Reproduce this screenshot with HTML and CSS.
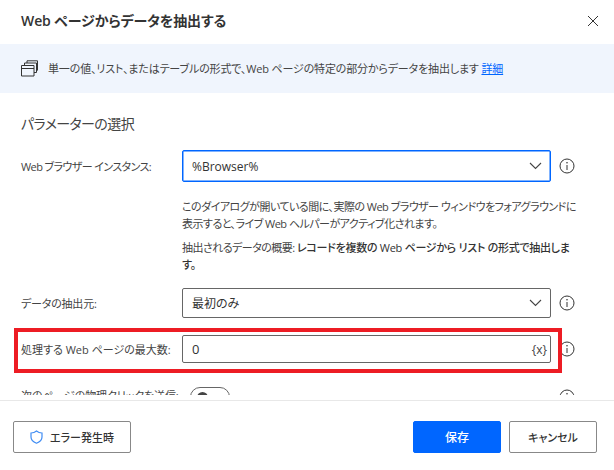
FILE: index.html
```html
<!DOCTYPE html>
<html lang="ja">
<head>
<meta charset="utf-8">
<title>Web ページからデータを抽出する</title>
<link rel="stylesheet" href="styles.css">
</head>
<body>
<div class="dialog">
  <header class="head">
    <h1 class="title">Web ページからデータを抽出する</h1>
    <svg class="close" width="12" height="12" viewBox="0 0 12 12"><path d="M1 1l10 10M11 1L1 11" stroke="#333" stroke-width="1" fill="none"/></svg>
  </header>
  <div class="banner">
    <svg class="banner-icon" width="17" height="17" viewBox="0 0 17 17" fill="none" stroke="#333"><path d="M.5 5.500h12.500v10.500H.5zM.5 8.500H13M3.500 5V3H15.500v9.500H13M6 3V.8h10.500v9.500H15.500"/></svg>
    <span class="banner-text">単一の値、リスト、またはテーブルの形式で、Web ページの特定の部分からデータを抽出します <a class="link" href="#">詳細</a></span>
  </div>
  <main class="body">
    <h2 class="section">パラメーターの選択</h2>
    <div class="row">
      <label class="label label-tight">Web ブラウザー インスタンス:</label>
      <div class="control focus"><span>%Browser%</span><svg class="chev" width="13" height="8" viewBox="0 0 13 8"><path d="M1 1l5.500 5.500L12 1" fill="none" stroke="#444" stroke-width="1.100"/></svg></div>
      <svg class="info" width="16" height="16" viewBox="0 0 16 16"><circle cx="8" cy="8" r="7" fill="none" stroke="#333"/><path d="M8 7v5" stroke="#333"/><circle cx="8" cy="4.800" r=".8" fill="#333"/></svg>
    </div>
    <div class="notes">
      <p class="note">このダイアログが開いている間に、実際の Web ブラウザー ウィンドウをフォアグラウンドに表示すると、ライブ Web ヘルパーがアクティブ化されます。</p>
      <p class="note">抽出されるデータの概要: <span class="strong">レコードを複数の Web ページから リスト の形式で抽出します。</span></p>
    </div>
    <div class="row row-select">
      <label class="label">データの抽出元:</label>
      <div class="control"><span>最初のみ</span><svg class="chev" width="13" height="8" viewBox="0 0 13 8"><path d="M1 1l5.500 5.500L12 1" fill="none" stroke="#444" stroke-width="1.100"/></svg></div>
      <svg class="info" width="16" height="16" viewBox="0 0 16 16"><circle cx="8" cy="8" r="7" fill="none" stroke="#333"/><path d="M8 7v5" stroke="#333"/><circle cx="8" cy="4.800" r=".8" fill="#333"/></svg>
    </div>
    <div class="row row-input">
      <label class="label label-wide">処理する Web ページの最大数:</label>
      <div class="control input"><span>0</span><span class="var">{x}</span></div>
      <svg class="info" width="16" height="16" viewBox="0 0 16 16"><circle cx="8" cy="8" r="7" fill="none" stroke="#333"/><path d="M8 7v5" stroke="#333"/><circle cx="8" cy="4.800" r=".8" fill="#333"/></svg>
      <div class="highlight"></div>
    </div>
    <div class="row row-toggle">
      <label class="label label-raised">次のページの物理クリックを送信:</label>
      <div class="toggle-wrap"><div class="toggle"><span class="knob"></span></div></div>
      <svg class="info" width="16" height="16" viewBox="0 0 16 16"><circle cx="8" cy="8" r="7" fill="none" stroke="#333"/><path d="M8 7v5" stroke="#333"/><circle cx="8" cy="4.800" r=".8" fill="#333"/></svg>
    </div>
  </main>
  <footer class="foot">
    <button class="btn btn-error"><svg width="13" height="14" viewBox="0 0 13 14"><path d="M6.500 1C5 2.300 3 3 1 3v4c0 3 2.200 5 5.500 6.200C9.800 12 12 10 12 7V3C10 3 8 2.300 6.500 1z" fill="none" stroke="#3f8cf3" stroke-width="1.200"/></svg><span>エラー発生時</span></button>
    <div class="spacer"></div>
    <button class="btn btn-primary">保存</button>
    <button class="btn btn-cancel">キャンセル</button>
  </footer>
</div>
</body>
</html>
```
FILE: styles.css
```css
* { box-sizing: border-box; }
html, body { margin: 0; padding: 0; background: #fff; }
body { font-family: "Open Sans", "Noto Sans CJK JP", sans-serif; font-feature-settings: "palt"; color: #333; overflow: hidden; }
.dialog { width: 614px; height: 470px; display: flex; flex-direction: column; overflow: hidden; }
.head { height: 44px; flex: none; display: flex; align-items: center; justify-content: space-between; padding: 0 15px 3px 21px; }
.title { margin: 0; font-size: 14px; font-weight: 600; line-height: 20px; letter-spacing: -.1px; color: #333; }
.close { display: block; }
.banner { height: 49px; flex: none; background: #f0f5fd; display: flex; align-items: center; gap: 10px; padding: 0 21px; }
.banner-icon { flex: none; }
.banner-text { font-size: 11px; line-height: 16px; letter-spacing: -.15px; color: #444; white-space: nowrap; }
.link { color: #0066ff; }
.body { height: 302px; flex: none; overflow: hidden; padding: 0 0 0 21px; }
.section { margin: 0; padding-top: 21px; height: 57px; font-size: 14px; font-weight: 400; line-height: 20px; letter-spacing: -.6px; color: #444; }
.row { display: flex; align-items: center; position: relative; }
.label { width: 161px; flex: none; font-size: 11px; letter-spacing: -.2px; color: #444; white-space: nowrap; }
.label-tight { letter-spacing: -.6px; }
.label-wide { letter-spacing: 0; }
.label-raised { margin-bottom: 4px; letter-spacing: -.1px; }
.control { width: 369px; height: 32px; flex: none; border: 1px solid #666; border-radius: 2px; display: flex; align-items: center; justify-content: space-between; padding: 0 8px 0 9px; font-size: 12px; color: #333; }
.control.focus { border: 1px solid #0066ff; box-shadow: inset 0 0 0 .5px #0066ff; }
.info { flex: none; margin-left: 8px; }
.notes { margin-left: 161px; padding-top: 17px; width: 396px; }
.note { margin: 0 0 8px; font-size: 11px; line-height: 16.500px; letter-spacing: -.52px; color: #444; }
.strong { font-weight: 500; color: #333; letter-spacing: -.28px; }
.row-select { margin-top: 15px; }
.row-select .control { height: 30px; }
.row-input { margin-top: 17px; }
.row-input .control { height: 28px; padding: 0 3px 0 9px; font-size: 13px; }
.var { font-size: 12px; color: #444; }
.highlight { position: absolute; left: -7px; top: -7px; width: 548px; height: 45px; border: 4.500px solid #ed1c24; pointer-events: none; }
.row-toggle { margin-top: 24px; }
.toggle-wrap { width: 369px; flex: none; }
.toggle { width: 40px; height: 20px; border: 1px solid #666; border-radius: 10px; margin-left: 8px; padding: 4px; }
.knob { display: block; width: 11px; height: 11px; margin-left: 2px; border-radius: 50%; background: #444; }
.foot { flex: 1; margin-top: 5px; border-top: 1px solid #e8e8e8; display: flex; align-items: flex-start; padding: 20px 17px 0 13px; gap: 8px; }
.spacer { flex: 1; }
.btn { height: 32px; border-radius: 2px; font-family: inherit; font-feature-settings: "palt"; font-size: 11px; font-weight: 500; background: #fff; border: 1px solid #888; color: #333; padding: 0; display: flex; align-items: center; justify-content: center; }
.btn-error { width: 118px; gap: 7px; }
.btn-error svg { flex: none; }
.btn-primary { width: 88px; background: #0066ff; border-color: #0066ff; color: #fff; font-size: 12px; }
.btn-cancel { width: 88px; }
```
